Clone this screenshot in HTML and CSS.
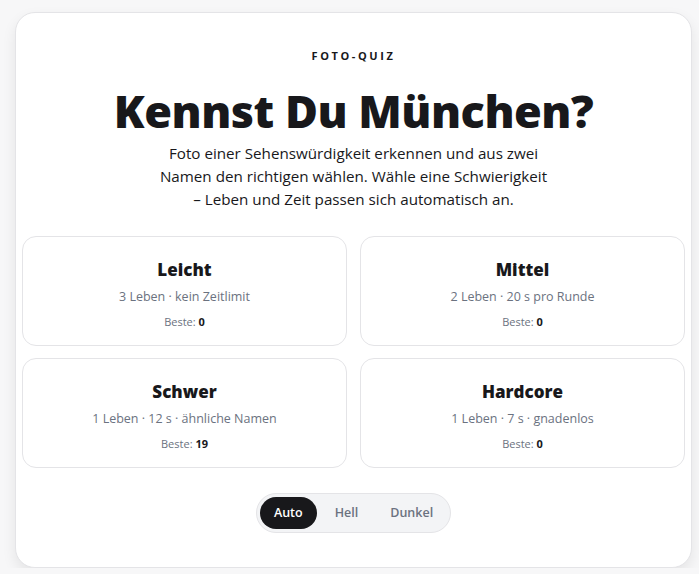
FILE: index.html
```html
<!DOCTYPE html>
<html lang="de">
<head>
    <meta charset="UTF-8">
    <meta name="viewport" content="width=device-width, initial-scale=1.0">
    <title>Kennst Du München?</title>
    <link rel="stylesheet" href="styles.css">
</head>
<body>
    <div class="card">
        <div class="eyebrow">FOTO-QUIZ</div>
        <h1>Kennst Du München?</h1>
        <p class="intro">Foto einer Sehenswürdigkeit erkennen und aus zwei Namen den richtigen wählen. Wähle eine Schwierigkeit <span class="nowrap">– Leben</span> und Zeit passen sich automatisch an.</p>

        <!-- Difficulty levels -->
        <div class="levels">
            <button class="level">
                <span class="level-name">Leicht</span>
                <span class="level-info">3 Leben · kein Zeitlimit</span>
                <span class="level-best">Beste: <b>0</b></span>
            </button>
            <button class="level">
                <span class="level-name">Mittel</span>
                <span class="level-info">2 Leben · 20 s pro Runde</span>
                <span class="level-best">Beste: <b>0</b></span>
            </button>
            <button class="level">
                <span class="level-name">Schwer</span>
                <span class="level-info">1 Leben · 12 s · ähnliche Namen</span>
                <span class="level-best">Beste: <b>19</b></span>
            </button>
            <button class="level">
                <span class="level-name">Hardcore</span>
                <span class="level-info">1 Leben · 7 s · gnadenlos</span>
                <span class="level-best">Beste: <b>0</b></span>
            </button>
        </div>

        <!-- Theme switch -->
        <div class="theme-switch">
            <button class="theme-btn active">Auto</button>
            <button class="theme-btn">Hell</button>
            <button class="theme-btn">Dunkel</button>
        </div>
    </div>
</body>
</html>
```

FILE: styles.css
```css
body {
    font-family: "Open Sans", "Noto Sans", Arial, sans-serif;
    background-color: #f7f7f8;
    color: #18181b;
    margin: 0;
    padding: 12px 7px 0 15px;
}
.card {
    background-color: #fff;
    border: 1px solid #e4e4e7;
    border-radius: 20px;
    box-shadow: 0 6px 14px rgba(0, 0, 0, 0.08);
    padding: 35px 6px 34px;
    text-align: center;
}
.eyebrow {
    font-size: 11px;
    font-weight: 700;
    letter-spacing: 2.6px;
    line-height: 16px;
}
h1 {
    font-family: "Open Sans", sans-serif;
    font-size: 45px;
    font-weight: 800;
    letter-spacing: -0.5px;
    line-height: 56px;
    margin: 19px 0 0;
}
.intro {
    font-size: 15.2px;
    line-height: 23px;
    max-width: 400px;
    margin: 3px auto 25px;
}
.nowrap {
    white-space: nowrap;
}
.levels {
    display: grid;
    grid-template-columns: 1fr 1fr;
    gap: 12px 13px;
}
.level {
    display: flex;
    flex-direction: column;
    align-items: center;
    height: 110px;
    padding: 21px 10px 0;
    background-color: #fff;
    border: 1px solid #e4e4e7;
    border-radius: 14px;
    font-family: inherit;
    color: inherit;
    cursor: pointer;
}
.level-name {
    font-size: 17px;
    font-weight: 800;
    line-height: 24px;
}
.level-info {
    font-size: 12.5px;
    color: #6b7280;
    line-height: 18px;
    margin-top: 6px;
}
.level-best {
    font-size: 11px;
    color: #6b7280;
    line-height: 16px;
    margin-top: 8px;
}
.level-best b {
    color: #18181b;
    font-weight: 700;
}
.theme-switch {
    display: inline-flex;
    gap: 4px;
    margin-top: 25px;
    padding: 3px;
    background-color: #f3f4f6;
    border: 1px solid #e4e4e7;
    border-radius: 20px;
}
.theme-btn {
    border: none;
    background: none;
    padding: 7px 14px 8px;
    border-radius: 16px;
    font-family: inherit;
    font-size: 12.5px;
    font-weight: 600;
    color: #6b7280;
    cursor: pointer;
}
.theme-btn.active {
    background-color: #18181b;
    color: #fff;
}
```
